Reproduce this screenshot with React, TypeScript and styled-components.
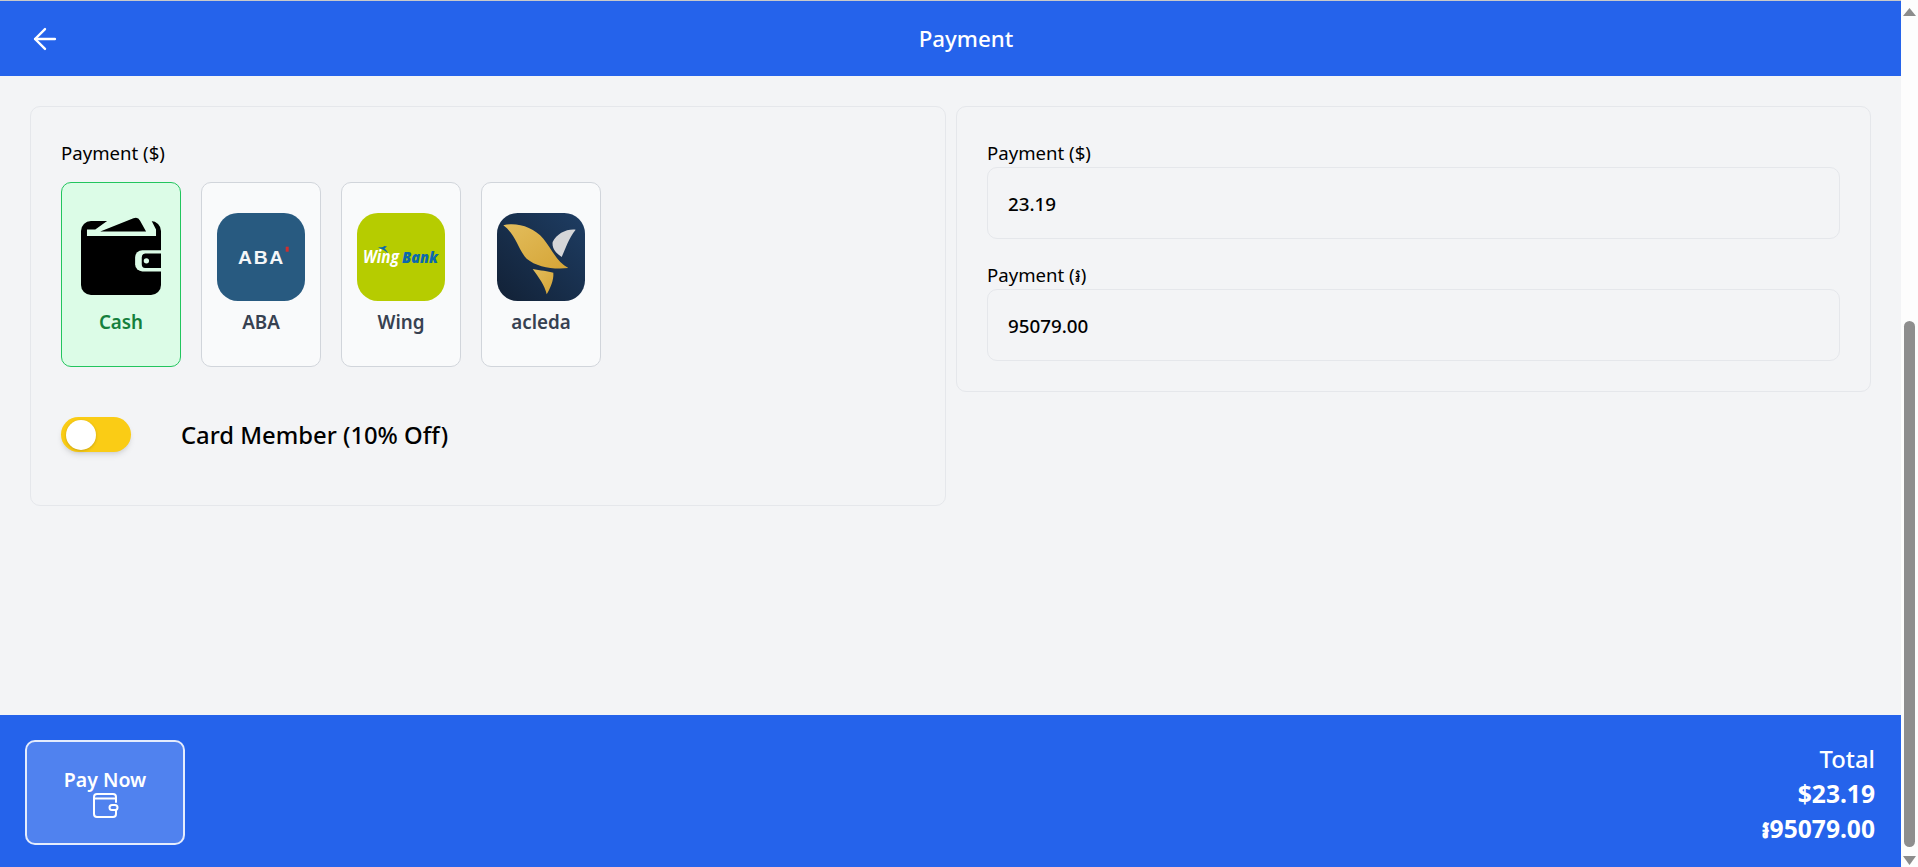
import React from "react";
import styled, { createGlobalStyle } from "styled-components";
import { ArrowLeft } from "lucide-react";

const Global = createGlobalStyle`
  html, body { margin: 0; padding: 0; height: 100%; overflow: hidden; }
  body { font-family: "Noto Sans", "Open Sans", "DejaVu Sans", sans-serif; color: #000; }
  #root { height: 100%; }
  * { box-sizing: border-box; }
`;

const Shell = styled.div`
  display: flex;
  height: 867px;
  width: 1918px;
  background: #f3f4f6;
`;
const Page = styled.div`
  flex: 1;
  min-width: 0;
  display: flex;
  flex-direction: column;
`;
const Header = styled.header`
  height: 76px;
  flex: none;
  background: #2563eb;
  border-top: 1px solid #c9c9c9;
  display: flex;
  align-items: center;
  padding: 0 31px 0 28px;
  color: #fff;
`;
const BackButton = styled.span`
  display: flex;
  width: 34px;
  height: 34px;
`;
const Title = styled.h1`
  flex: 1;
  margin: 0;
  padding-top: 1px;
  text-align: center;
  font-size: 22.3px;
  font-weight: 500;
  line-height: 30px;
`;
const Content = styled.main`
  flex: 1;
  display: grid;
  grid-template-columns: 916px 915px;
  column-gap: 10px;
  align-items: start;
  padding: 30px 30px 0;
`;
const Panel = styled.section<{ $h: number }>`
  height: ${(p) => p.$h}px;
  border: 1px solid #e5e7eb;
  border-radius: 10px;
  padding: 34px 30px 0;
`;
const Label = styled.div`
  font-size: 18.6px;
  line-height: 24px;
  height: 24px;
`;
const Methods = styled.div`
  display: flex;
  gap: 20px;
  margin-top: 17px;
`;
const Method = styled.div<{ $active?: boolean }>`
  width: 120px;
  height: 185px;
  border-radius: 10px;
  border: 1px solid ${(p) => (p.$active ? "#22c55e" : "#d1d5db")};
  background: ${(p) => (p.$active ? "#dcfce7" : "#f9fafb")};
  color: ${(p) => (p.$active ? "#15803d" : "#374151")};
  display: flex;
  flex-direction: column;
  align-items: center;
  padding-top: 30px;
  font-size: 18.8px;
  font-weight: 600;
`;
const LogoBox = styled.div`
  width: 88px;
  height: 88px;
  display: flex;
  align-items: center;
  justify-content: center;
  flex: none;
`;
const MethodName = styled.span`
  margin-top: 9px;
  line-height: 24px;
`;
const MemberRow = styled.div`
  display: flex;
  align-items: center;
  gap: 50px;
  margin-top: 50px;
`;
const Toggle = styled.div`
  width: 70px;
  height: 35px;
  border-radius: 18px;
  background: #facc15;
  box-shadow: 0 4px 6px -1px rgba(0, 0, 0, 0.1), 0 2px 4px -2px rgba(0, 0, 0, 0.1);
  display: flex;
  align-items: center;
  padding-left: 5px;
`;
const Knob = styled.span`
  width: 30px;
  height: 30px;
  border-radius: 50%;
  background: #fff;
  box-shadow: 0 1px 3px rgba(0, 0, 0, 0.2);
`;
const MemberText = styled.span`
  font-size: 23.8px;
  font-weight: 500;
  line-height: 30px;
  padding-top: 1px;
`;
const AmountField = styled.div`
  height: 72px;
  margin-bottom: 24px;
  margin-top: 2px;
  padding-top: 1px;
  border: 1px solid #e5e7eb;
  border-radius: 10px;
  display: flex;
  align-items: center;
  padding-left: 20px;
  font-size: 18.8px;
  font-weight: 500;
`;
const Footer = styled.footer`
  height: 152px;
  flex: none;
  background: #2563eb;
  color: #fff;
  display: flex;
  align-items: center;
  justify-content: space-between;
  padding: 0 26px 0 25px;
`;
const PayButton = styled.div`
  width: 160px;
  height: 105px;
  margin-top: 2px;
  padding-top: 4px;
  border: 2px solid rgba(255, 255, 255, 0.85);
  border-radius: 10px;
  background: rgba(255, 255, 255, 0.2);
  display: flex;
  flex-direction: column;
  align-items: center;
  justify-content: center;
  font-size: 19.5px;
  font-weight: 600;
  line-height: 21px;
  gap: 2px;
`;
const Totals = styled.div`
  display: flex;
  flex-direction: column;
  align-items: flex-end;
  margin-top: 5px;
`;
const TotalLabel = styled.span`
  font-size: 23.8px;
  font-weight: 500;
  line-height: 35px;
`;
const TotalValue = styled.span`
  font-size: 24.6px;
  font-weight: 700;
  line-height: 35px;
  margin-top: -0.5px;
`;
const Scrollbar = styled.aside`
  width: 17px;
  flex: none;
  background: #fdfdfd;
  display: flex;
  flex-direction: column;
  align-items: center;
  padding-top: 8px;
  color: #8c8c8c;
`;
const Thumb = styled.div`
  width: 11px;
  height: 526px;
  margin-top: 305px;
  margin-bottom: 9px;
  border-radius: 6px;
  background: #8e8e8e;
`;

const WalletLogo = () => (
  <svg width="80" height="80" viewBox="92 143 241 241" style={{ marginTop: -1 }}>
    <rect x="92" y="155" width="241" height="223" rx="30" fill="#000" />
    <polygon points="92,143 333,143 333,155 305,155 318,181 318,200 110,200 110,181 135,181 178,150 92,150" fill="#dcfce7" />
    <path d="M150 187 L250 147 Q264 142 270 154 L288 187 Z" fill="#000" />
    <path d="M333 243 H277 A22 22 0 0 0 255 265 V285 A22 22 0 0 0 277 307 H333 Z" fill="#dcfce7" />
    <path d="M333 253 H285 A12 12 0 0 0 275 265 V285 A12 12 0 0 0 285 297 H333 Z" fill="#000" />
    <circle cx="289" cy="275" r="8" fill="#dcfce7" />
  </svg>
);

const AbaLogo = () => (
  <svg width="88" height="88" viewBox="0 0 88 88">
    <rect width="88" height="88" rx="21" fill="#285a80" />
    <text x="21" y="50.7" textLength="47" lengthAdjust="spacingAndGlyphs" letterSpacing="1.6" fill="#f4f6f8" fontFamily="Liberation Sans, sans-serif" fontSize="18.5" fontWeight="700">ABA</text>
    <rect x="68.7" y="33.7" width="3" height="5" fill="#cf2e2e" />
  </svg>
);

const WingLogo = () => (
  <svg width="88" height="88" viewBox="0 0 88 88">
    <rect width="88" height="88" rx="21" fill="#b6cc00" />
    <text x="6" y="50" textLength="36" lengthAdjust="spacingAndGlyphs" fill="#fff" fontFamily="Open Sans, sans-serif" fontSize="17" fontWeight="700" fontStyle="italic">Wing</text>
    <text x="45" y="50" textLength="36" lengthAdjust="spacingAndGlyphs" fill="#0b68ad" fontFamily="Open Sans, sans-serif" fontSize="15.5" fontWeight="800" fontStyle="italic">Bank</text>
    <path d="M21 34 C24 34.5 26 34.5 27.5 33 L30 33.5 L27.5 35.5 C29 36.5 30.5 38.5 31 40.5 C29 38.5 27 37 25.5 36.5 C24 36 22.5 35 21 34 Z" fill="#0b68ad" />
  </svg>
);

const AcledaLogo = () => (
  <svg width="88" height="88" viewBox="501 128 264 264">
    <defs>
      <linearGradient id="acledaBg" x1="0" y1="1" x2="1" y2="0">
        <stop offset="0" stopColor="#122136" />
        <stop offset="1" stopColor="#1e3d63" />
      </linearGradient>
      <linearGradient id="acledaGold" x1="0" y1="0" x2="1" y2="1">
        <stop offset="0" stopColor="#e3bd5c" />
        <stop offset="1" stopColor="#d5a537" />
      </linearGradient>
    </defs>
    <rect x="501" y="128" width="264" height="264" rx="62" fill="url(#acledaBg)" />
    <path d="M520 165 C560 155 610 170 640 205 C665 235 680 275 715 293 C670 298 620 290 590 265 C565 240 560 195 520 165 Z" fill="url(#acledaGold)" />
    <path d="M608 296 C630 300 655 303 670 307 C672 330 660 355 650 372 C645 345 625 320 608 296 Z" fill="url(#acledaGold)" />
    <path d="M737 178 C710 175 680 190 668 215 C665 235 680 250 695 260 C705 240 715 205 737 178 Z" fill="#d5d6d8" />
  </svg>
);

const PayWalletIcon = () => (
  <svg width="27" height="27" viewBox="0 0 27 27" fill="none" stroke="#fff" strokeWidth="2" strokeLinejoin="round" strokeLinecap="round">
    <path d="M24 10 V5 A3 3 0 0 0 21 2 H5 A3 3 0 0 0 2 5 V22 A3 3 0 0 0 5 25 H21 A3 3 0 0 0 24 22 V18" />
    <path d="M2 6.5 H24" />
    <rect x="17.5" y="13" width="8" height="5" rx="2.5" />
  </svg>
);

const methods = [
  { name: "Cash", logo: <WalletLogo />, active: true },
  { name: "ABA", logo: <AbaLogo /> },
  { name: "Wing", logo: <WingLogo /> },
  { name: "acleda", logo: <AcledaLogo /> },
];

export default function App() {
  return (
    <Shell>
      <Global />
      <Page>
        <Header>
          <BackButton><ArrowLeft size={34} strokeWidth={1.7} /></BackButton>
          <Title>Payment</Title>
        </Header>
        <Content>
          <Panel $h={400}>
            <Label>Payment ($)</Label>
            <Methods>
              {methods.map((m) => (
                <Method key={m.name} $active={m.active}>
                  <LogoBox>{m.logo}</LogoBox>
                  <MethodName>{m.name}</MethodName>
                </Method>
              ))}
            </Methods>
            <MemberRow>
              <Toggle><Knob /></Toggle>
              <MemberText>Card Member (10% Off)</MemberText>
            </MemberRow>
          </Panel>
          <Panel $h={286}>
            <Label>Payment ($)</Label>
            <AmountField>23.19</AmountField>
            <Label>Payment (៛)</Label>
            <AmountField>95079.00</AmountField>
          </Panel>
        </Content>
        <Footer>
          <PayButton>
            Pay Now
            <PayWalletIcon />
          </PayButton>
          <Totals>
            <TotalLabel>Total</TotalLabel>
            <TotalValue>$23.19</TotalValue>
            <TotalValue>៛95079.00</TotalValue>
          </Totals>
        </Footer>
      </Page>
      <Scrollbar>
        <svg width="13" height="8" viewBox="0 0 13 8"><path d="M6.5 0 L13 8 H0 Z" fill="currentColor" /></svg>
        <Thumb />
        <svg width="13" height="9" viewBox="0 0 13 9"><path d="M0 0 H13 L6.5 9 Z" fill="currentColor" /></svg>
      </Scrollbar>
    </Shell>
  );
}
